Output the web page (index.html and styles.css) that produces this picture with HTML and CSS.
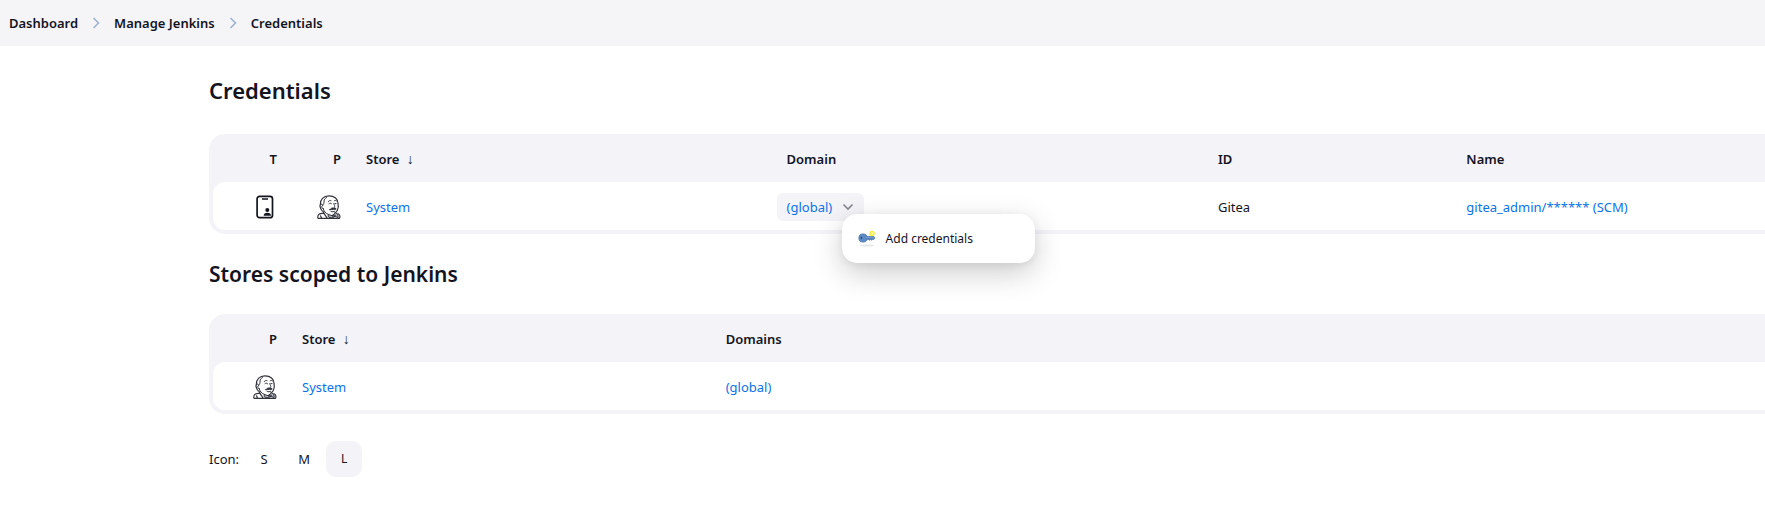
FILE: index.html
```html
<!DOCTYPE html>
<html lang="en">
<head>
<meta charset="utf-8">
<title>Credentials - Jenkins</title>
<link rel="stylesheet" href="styles.css">
</head>
<body>
<svg class="defs" aria-hidden="true">
  <symbol id="jenkins" viewBox="0 0 24 24">
    <g fill="none" stroke="currentColor" stroke-linecap="round" stroke-linejoin="round">
      <path stroke-width="1.2" d="M4.200 14.500C3 12.500 2.700 10.500 3.400 9.300C3 4.500 6.500 1 12 .9C17.500.9 21 4 21 8.500C21.600 11 21.500 13.500 20.300 15.500C19.500 17 18.500 17.800 17.500 18.200M4.200 14.500C5 15.800 5.500 16.200 6.200 16.500L7 18.500"/>
      <path stroke-width="1" d="M3.500 9.300C4.800 8.500 5.700 9.300 5.700 10.500M4.800 11.500C4.600 12.700 5.200 13.700 6.100 13.500M5.700 10.500C6.800 9.300 7.200 7.500 7 6C7.200 4.300 8.200 3.300 9.500 2.600M6.100 13.500C6.700 16 8.500 18.500 11.500 19.500"/>
      <path stroke-width="1" d="M11.300 6.600C12 5.500 13 5.200 14 5.600M17.200 5.800C18 5.200 19 5.300 19.600 6M12 8.600C12.800 8 13.700 8 14.500 8.700M17.700 8.700L19 8.600M16.700 8.800C17.300 10.200 18.300 11.200 17.700 12"/>
      <path stroke-width="1" fill="currentColor" d="M12.800 14.700C14 13.300 15.200 12.700 16.300 13.100C17.500 12.500 18.500 13.100 19.200 14.100C17.700 14.400 15.500 14.500 12.800 14.700Z"/>
      <path stroke-width="1" d="M14 16.300C15.300 17 16.700 17 17.800 16.200"/>
      <path stroke-width="1.200" d="M7 18.400C4 18.100 1.200 19 .9 21.200C.6 22.500.8 23.300 1.500 23.300H22.500C23.300 22 22.900 19.500 21.200 18.800M7 18.400L10 22.900M3.500 20.800L4.500 23"/>
      <path stroke-width="1" fill="#b4b4bc" d="M11.500 19.500L15 20.700L18.500 17.900L20.800 19L21.200 22.500L18 21.500L14 22.900L11.700 22Z"/>
      <path stroke-width="1" d="M15.200 20.700L16.700 22.300L18.200 20.500Z"/>
    </g>
  </symbol>
</svg>

<nav class="breadcrumbs" aria-label="Breadcrumbs">
  <a href="#">Dashboard</a>
  <svg class="separator" viewBox="0 0 8 12" aria-hidden="true"><path d="M1.500 1L6.500 6L1.500 11"/></svg>
  <a href="#">Manage Jenkins</a>
  <svg class="separator" viewBox="0 0 8 12" aria-hidden="true"><path d="M1.500 1L6.500 6L1.500 11"/></svg>
  <a href="#">Credentials</a>
</nav>

<main class="content">
  <h1 class="title">Credentials</h1>
  <div class="table-frame">
    <table class="table">
      <colgroup>
        <col class="col-lead"><col class="col-icon"><col class="col-store"><col class="col-domain"><col class="col-id"><col>
      </colgroup>
      <thead>
        <tr><th class="icon-cell">T</th><th class="icon-cell">P</th><th>Store <span class="sort">↓</span></th><th>Domain</th><th>ID</th><th>Name</th></tr>
      </thead>
      <tbody>
        <tr>
          <td class="icon-cell">
            <svg class="icon" viewBox="0 0 24 24" aria-label="Credential">
              <rect x="4.100" y="1.300" width="15.400" height="21.400" rx="2.500" fill="none" stroke="currentColor" stroke-width="1.700"/>
              <path d="M9 4H15" fill="none" stroke="currentColor" stroke-width="1.500"/>
              <circle cx="14.300" cy="15" r="2" fill="currentColor"/>
              <path d="M10.700 20.800C10.700 18.800 12 17.700 14.300 17.700S18 18.800 18 20.800Z" fill="currentColor"/>
            </svg>
          </td>
          <td class="icon-cell"><svg class="icon icon-person" aria-label="Jenkins"><use href="#jenkins"/></svg></td>
          <td><a href="#">System</a></td>
          <td>
            <div class="chip">
              <a href="#">(global)</a>
              <button class="chip-toggle" type="button" aria-label="Open menu for (global)" aria-expanded="true">
                <svg viewBox="0 0 12 8"><path d="M1.500 1.500L6 6L10.500 1.500"/></svg>
              </button>
              <div class="menu">
                <a class="menu-item" href="#">
                  <svg class="key" viewBox="0 0 18 18" aria-hidden="true">
                    <ellipse cx="9" cy="15.500" rx="7" ry="1" fill="#e6e6e8"/>
                    <circle cx="14" cy="3.500" r="2.100" fill="#fff9a0" stroke="#fcee35" stroke-width="1.400"/>
                    <path d="M8 6.500H16L17 8L15.800 9.500H14.500L13.700 10.300L12.700 9.600L11.500 10.300L10.500 9.600H8Z" fill="#4a78b4" stroke="#4273ae" stroke-width=".6"/>
                    <circle cx="5" cy="8" r="4.100" fill="#5c8ac4" stroke="#4575b2" stroke-width=".8"/>
                    <path d="M8 7.800H16" stroke="#8fb2dc" stroke-width=".8"/>
                    <ellipse cx="3.400" cy="7.800" rx=".7" ry="1.400" fill="#294a73"/>
                  </svg>
                  <span>Add credentials</span>
                </a>
              </div>
            </div>
          </td>
          <td>Gitea</td>
          <td><a href="#">gitea_admin/****** (SCM)</a></td>
        </tr>
      </tbody>
    </table>
  </div>

  <h2 class="title title-sub">Stores scoped to Jenkins</h2>
  <div class="table-frame">
    <table class="table">
      <colgroup><col class="col-lead"><col class="col-store-wide"><col></colgroup>
      <thead>
        <tr><th class="icon-cell">P</th><th>Store <span class="sort">↓</span></th><th>Domains</th></tr>
      </thead>
      <tbody>
        <tr>
          <td class="icon-cell"><svg class="icon icon-person" aria-label="Jenkins"><use href="#jenkins"/></svg></td>
          <td><a href="#">System</a></td>
          <td><a href="#">(global)</a></td>
        </tr>
      </tbody>
    </table>
  </div>

  <div class="sizes">
    <span class="sizes-label">Icon:</span>
    <button class="size" type="button">S</button>
    <button class="size" type="button">M</button>
    <button class="size size-current" type="button" aria-pressed="true">L</button>
  </div>
</main>
</body>
</html>
```

FILE: styles.css
```css
* { box-sizing: border-box; }

body {
  margin: 0;
  background: #fff;
  color: #14141f;
  font: 13px/20px "Noto Sans", "Open Sans", sans-serif;
}

a { color: #0b73e8; text-decoration: none; }

button { font: inherit; color: inherit; border: 0; background: none; padding: 0; }

.defs { display: none; }

.breadcrumbs {
  display: flex;
  align-items: center;
  gap: 14px;
  height: 46px;
  padding: 0 9px;
  background: #f5f5f8;
  font-weight: 600;
}

.breadcrumbs a { color: inherit; }

.separator { width: 8px; height: 12px; fill: none; stroke: #9db1cc; stroke-width: 1.5; }

.content { padding: 28px 0 28px 209px; }

.title { margin: 0 0 28px; font-size: 22px; line-height: 32px; font-weight: 600; }

.title-sub { margin-bottom: 24px; font-size: 21px; }

.table-frame {
  margin-bottom: 24px;
  padding: 0 0 4px 4px;
  background: #f3f3f8;
  border-radius: 16px 0 0 16px;
}

.table { width: 100%; table-layout: fixed; border-collapse: separate; border-spacing: 0; }

.col-lead { width: 77px; }
.col-icon { width: 64px; }
.col-store { width: 27.1%; }
.col-domain { width: 27.8%; }
.col-id { width: 16%; }
.col-store-wide { width: 27.3%; }

th, td { height: 48px; padding: 2px 13px 0 12px; text-align: left; vertical-align: middle; white-space: nowrap; }

th { font-weight: 600; }

td { background: #fff; }

td:first-child { border-radius: 12px 0 0 12px; }

.icon-cell { text-align: right; }

.sort { margin-left: 4px; font-size: 14px; font-weight: 400; }

.icon { display: inline-block; width: 24px; height: 24px; vertical-align: middle; }

.icon-person { color: #32323c; }

.chip {
  position: relative;
  display: inline-flex;
  align-items: center;
  gap: 10px;
  height: 28px;
  margin-left: -10px;
  padding: 0 10px;
  border-radius: 6px;
  background: #f3f3f8;
  vertical-align: middle;
}

.chip-toggle { display: flex; }

.chip-toggle svg { width: 12px; height: 8px; fill: none; stroke: #84848c; stroke-width: 1.6; }

.menu {
  position: absolute;
  top: 21px;
  left: 65px;
  z-index: 1;
  width: 193px;
  padding: 6px;
  border-radius: 15px;
  background: #fff;
  box-shadow: 0 10px 30px rgba(0, 0, 0, 0.2), 0 2px 8px rgba(0, 0, 0, 0.06);
}

.menu-item {
  display: flex;
  align-items: center;
  gap: 10px;
  height: 37px;
  padding: 1px 10px 0;
  color: inherit;
  font-size: 12px;
}

.key { width: 18px; height: 18px; }

.sizes { display: flex; align-items: center; padding-top: 3px; }

.sizes-label { margin-right: 7px; }

.size { width: 36px; height: 36px; margin-right: 4px; border-radius: 10px; }

.size-current { background: #f3f3f8; font-size: 12px; }
```
